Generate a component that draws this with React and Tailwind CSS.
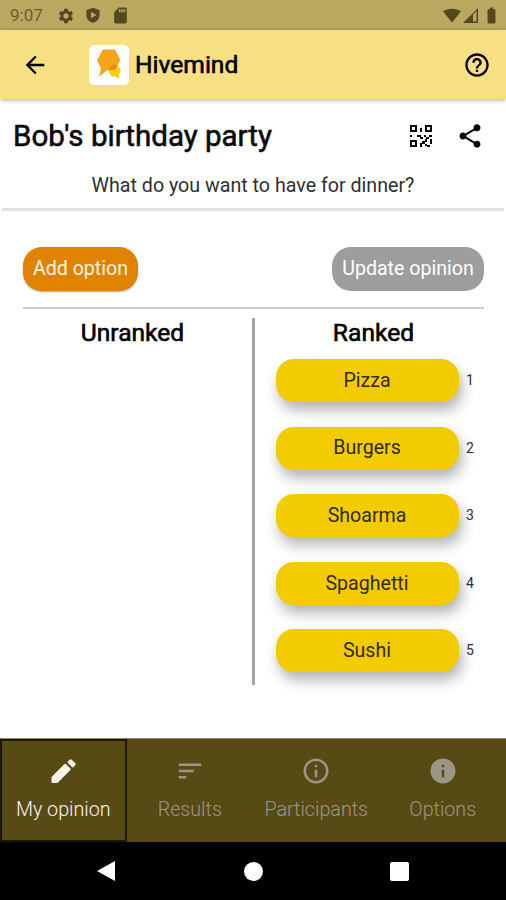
import {
  MdArrowBack,
  MdBatteryFull,
  MdHelpOutline,
  MdInfo,
  MdInfoOutline,
  MdSdCard,
  MdSettings,
  MdShare,
  MdSort,
} from "react-icons/md";

const RANKED = ["Pizza", "Burgers", "Shoarma", "Spaghetti", "Sushi"];

const TABS = [
  { label: "My opinion", icon: PencilIcon },
  { label: "Results", icon: MdSort },
  { label: "Participants", icon: MdInfoOutline },
  { label: "Options", icon: MdInfo },
];

// Pencil with rounded tip and eraser
function PencilIcon({ className }) {
  return (
    <svg viewBox="0 0 30 30" className={className} fill="currentColor" stroke="currentColor">
      <path
        strokeWidth="2"
        strokeLinejoin="round"
        d="M4.500 21.500 17.200 8.800 21.700 13.300 9 26H4.500Z"
      />
      <path
        strokeWidth="3"
        strokeLinejoin="round"
        d="m21.200 6.300 1.500-1.500 3.500 3.500-1.500 1.500Z"
      />
    </svg>
  );
}

function StatusBar() {
  return (
    <div className="flex h-[30px] shrink-0 items-center bg-[#baa860] pt-px pr-[5px] pl-[10px] text-[#54481f]">
      <span className="w-[47px] text-[17px] leading-none text-[#6a5d2f]">9:07</span>
      <MdSettings className="mr-[10px] size-[18px]" />
      <svg viewBox="0 0 16 18" className="mr-[10px] h-[17px] w-4" fill="currentColor">
        <path
          fillRule="evenodd"
          d="M8 .8 15 3.4v5.3c0 4-2.9 6.8-7 8-4.100-1.200-7-4-7-8V3.400ZM5.800 5v7l6-3.500Z"
        />
      </svg>
      <MdSdCard className="size-[19px]" />
      <svg viewBox="0 0 18 15" className="ml-auto h-[15px] w-[18px]" fill="currentColor">
        <path d="M0 3.500C5-.3 13-.3 18 3.500L9 14.500Z" />
      </svg>
      <svg viewBox="0 0 15 15" className="ml-[2px] h-[15px] w-[15px]" fill="currentColor">
        <path fillRule="evenodd" d="M0 15 15 0v15ZM10 6.500v7h3.500V3Z" />
      </svg>
      <MdBatteryFull className="ml-1 size-[19px]" />
    </div>
  );
}

function Logo() {
  return (
    <div className="ml-10 size-10 rounded-[5px] bg-white">
      <svg viewBox="0 0 40 40" className="size-10">
        <path fill="#f6a21a" d="M8 15.500 13.700 4.500H26L31.300 15 26 25H18.500L10.300 31.500 12 23Z" />
        <path fill="#f8cf08" d="M22.500 20H29L32 25.500 30 29.500 30.500 33 26.500 31.500H22.500L19.300 25.500Z" />
        <path fill="#ea8c10" d="M22.500 20H28.700L26 25H19.500Z" />
      </svg>
    </div>
  );
}

function AppBar() {
  return (
    <header className="relative flex h-[69px] shrink-0 items-center bg-[#f7e083] pr-[15px] pl-[21px] text-black shadow-[0_1px_5px_rgba(0,0,0,0.35)]">
      <MdArrowBack className="size-7" />
      <Logo />
      <h1 className="mt-[2px] ml-[6px] text-[24.6px] font-normal [-webkit-text-stroke:0.6px]">
        Hivemind
      </h1>
      <MdHelpOutline className="ml-auto size-7" />
    </header>
  );
}

function QrIcon() {
  return (
    <svg viewBox="0 0 22 22" className="size-[22px]" fill="currentColor">
      <path
        fillRule="evenodd"
        d="M0 0h7v7H0ZM2 2v3h3V2ZM15 0h7v7h-7ZM17 2v3h3V2ZM0 15h7v7H0ZM2 17v3h3v-3Z"
      />
      <path d="M10 3h2v4h-2ZM0 10h2v2H0ZM7 10h4v2H7ZM10 12h3v2h-3ZM14 10h2v2h-2ZM19 10h3v2h-3ZM16 12h3v2h-3ZM10 18h2v4h-2ZM12 16h3v3h-3ZM15 14h2v3h-2ZM15 19h2v2h-2ZM20 14h2v5h-2ZM17 20h3v2h-3Z" />
    </svg>
  );
}

function RankedItem({ label, rank }) {
  return (
    <li className="flex items-center">
      <div className="flex h-[43px] w-[183px] items-center justify-center rounded-[18px] bg-[#f3cc00] pr-px text-[19.6px] text-[#302b12] shadow-[3px_8px_14px_rgba(0,0,0,0.3)]">
        {label}
      </div>
      <span className="ml-[7px] text-[14px] text-[#303030]">{rank}</span>
    </li>
  );
}

function TabBar() {
  return (
    <nav className="grid h-[104px] shrink-0 grid-cols-4 border-t border-[#8e8565] bg-[#584a15]">
      {TABS.map(({ label, icon: Icon }, i) => (
        <div
          key={label}
          className={
            i === 0
              ? "flex flex-col items-center border-2 border-[#1c1805] pt-[15px] text-[#f8f4ea]"
              : "flex flex-col items-center pt-[17px] text-[#9c9685]"
          }
        >
          <Icon className="size-[30px]" />
          <span className="mt-[10px] text-[19.7px] leading-7 font-light">{label}</span>
        </div>
      ))}
    </nav>
  );
}

function SystemNav() {
  return (
    <div className="flex flex-1 items-center justify-between bg-black pr-[97px] pl-[97px] text-white">
      <svg viewBox="0 0 18 20" className="h-5 w-[18px]" fill="currentColor">
        <path d="M0 10 18 0v20Z" />
      </svg>
      <div className="ml-px size-[19px] rounded-full bg-white" />
      <div className="size-[19px] rounded-[2px] bg-white" />
    </div>
  );
}

export default function App() {
  return (
    <div className="flex h-[900px] w-[506px] flex-col overflow-hidden bg-white font-['Roboto',sans-serif] text-black">
      <StatusBar />
      <AppBar />
      <main className="flex h-[639px] shrink-0 flex-col">
        <div className="mx-[2px] border-b-3 border-[#e0e0e0]">
          <div className="flex h-[73px] items-center pr-[20px] pl-[11px]">
            <h2 className="mt-px text-[29.5px] font-normal text-[#0a0a0a] [-webkit-text-stroke:0.6px]">
              Bob's birthday party
            </h2>
            <div className="ml-auto flex items-center gap-[24px]">
              <QrIcon />
              <MdShare className="size-7" />
            </div>
          </div>
          <p className="h-9 text-center text-[19.65px] leading-[28px] text-[#303030]">
            What do you want to have for dinner?
          </p>
        </div>

        <div className="mr-[22px] ml-[23px] flex justify-between border-b-2 border-[#cfcfcf] pt-[36px] pb-[16px] text-[19.6px]">
          <button className="h-11 w-[115px] rounded-[19px] bg-[#e08300] pb-px text-[#fff5e6] shadow-[0_1px_2px_rgba(0,0,0,0.35)]">
            Add option
          </button>
          <button className="h-11 w-[152px] rounded-[19px] bg-[#9d9d9d] pb-px text-white">
            Update opinion
          </button>
        </div>

        <div className="mr-[22px] ml-[23px] mt-[9px] flex h-[367px]">
          <section className="w-[232px] border-r-3 border-[#a4a4a4] pr-[10px] text-center">
            <h3 className="text-[24.6px] leading-[30px] font-normal [-webkit-text-stroke:0.6px]">
              Unranked
            </h3>
          </section>
          <section className="flex-1 pl-[21px]">
            <h3 className="mr-[13px] text-center text-[24.6px] leading-[30px] font-normal [-webkit-text-stroke:0.6px]">
              Ranked
            </h3>
            <ol className="mt-[11px] flex flex-col gap-[24.600px]">
              {RANKED.map((label, i) => (
                <RankedItem key={label} label={label} rank={i + 1} />
              ))}
            </ol>
          </section>
        </div>
      </main>
      <TabBar />
      <SystemNav />
    </div>
  );
}
